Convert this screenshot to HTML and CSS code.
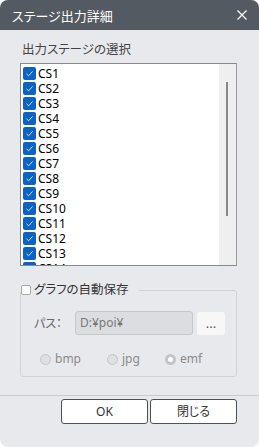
FILE: index.html
```html
<!DOCTYPE html>
<html lang="ja">
<head>
  <meta charset="UTF-8">
  <title>ステージ出力詳細</title>
  <link rel="stylesheet" href="styles.css">
</head>
<body>

  <div class="dialog">
    <div class="titlebar">
      <span class="title">ステージ出力詳細</span>
      <svg class="close" width="10" height="10" viewBox="0 0 10 10">
        <path d="M0.5 0.5 L9.5 9.5 M9.5 0.5 L0.5 9.5" stroke="#fff" stroke-width="1.3" fill="none"/>
      </svg>
    </div>

    <div class="content">
      <div class="label">出力ステージの選択</div>

      <div class="listbox">
        <div class="items" id="items"></div>
        <div class="scrollbar"><div class="thumb"></div></div>
      </div>

      <fieldset class="group">
        <legend><span class="box"></span>グラフの自動保存</legend>

        <div class="path-row">
          <span class="path-label">パス：</span>
          <div class="field">D:¥poi¥</div>
          <div class="browse">...</div>
        </div>

        <div class="radio-row">
          <div class="radio"><span class="dot"></span>bmp</div>
          <div class="radio"><span class="dot"></span>jpg</div>
          <div class="radio"><span class="dot on"></span>emf</div>
        </div>
      </fieldset>
    </div>

    <div class="separator"></div>

    <div class="buttons">
      <div class="btn">OK</div>
      <div class="btn">閉じる</div>
    </div>
  </div>

  <script>
    const items = document.getElementById('items');
    for (let i = 1; i <= 14; i++) {
      const row = document.createElement('div');
      row.className = 'item';
      row.innerHTML =
        '<span class="check"><svg width="13" height="13" viewBox="0 0 13 13">' +
        '<path d="M3.5 6.8 L5.6 8.8 L9.6 4.4" stroke="#cfe2f7" stroke-width="1" fill="none"/>' +
        '</svg></span>CS' + i;
      items.appendChild(row);
    }
  </script>
</body>
</html>
```

FILE: styles.css
```css
* {
  box-sizing: border-box;
}

body {
  margin: 0;
  background: #ffffff;
  font-family: "Noto Sans", "Noto Sans CJK JP", sans-serif;
  font-size: 12px;
  font-feature-settings: "palt";
}

.dialog {
  width: 259px;
  height: 447px;
  background: #e8e9ed;
  border-radius: 8px;
  overflow: hidden;
}

.titlebar {
  height: 30px;
  background: #545a62;
  color: #fff;
  display: flex;
  align-items: center;
  justify-content: space-between;
  padding: 0 12px 0 12px;
}

.title {
  font-size: 13px;
}

.content {
  padding: 0 22px 0 20px;
}

.label {
  margin-top: 12px;
  line-height: 16px;
  font-size: 12.5px;
  color: #444;
  padding-left: 2px;
}

.listbox {
  margin-top: 5px;
  height: 203px;
  border: 1px solid #8a8a8a;
  border-right-color: #9a9a9a;
  background: #fff;
  display: flex;
  overflow: hidden;
}

.items {
  flex: 1;
  padding: 2px 0 0 2px;
}

.item {
  height: 15px;
  line-height: 15px;
  display: flex;
  align-items: center;
  color: #000;
  gap: 2px;
}

.check {
  width: 13px;
  height: 13px;
  background: #0b63c5;
  border-radius: 2px;
  display: flex;
}

.scrollbar {
  width: 17px;
  background: #efefef;
  padding: 18px 0 0 7px;
}

.thumb {
  width: 2px;
  height: 134px;
  background: #888;
}

.group {
  margin: 16px 0 0 0;
  padding: 0 0 9px 0;
  border: 1px solid #d2d3d8;
  border-radius: 3px;
}

legend {
  padding: 0 10px 0 0;
  margin-left: 0;
  line-height: 16px;
  font-size: 12.5px;
  color: #333;
  display: flex;
  align-items: center;
  gap: 3px;
}

.box {
  width: 10px;
  height: 10px;
  background: #fff;
  border: 1px solid #a8a8a8;
  border-radius: 2px;
}

.path-row {
  margin-top: 13px;
  display: flex;
  align-items: center;
  padding-left: 13px;
}

.path-label {
  width: 41px;
  color: #666;
}

.field {
  width: 118px;
  height: 24px;
  background: #dcdde1;
  border: 1px solid #c6c7cb;
  border-radius: 3px;
  color: #777;
  line-height: 22px;
  padding-left: 4px;
}

.browse {
  width: 28px;
  height: 23px;
  margin-left: 4px;
  background: #f7f7f8;
  border-radius: 3px;
  color: #555;
  font-size: 13px;
  text-align: center;
  line-height: 22px;
}

.radio-row {
  margin-top: 16px;
  display: grid;
  grid-template-columns: 67px 58px auto;
  padding-left: 19px;
  line-height: 16px;
  color: #8a8a8a;
}

.radio {
  display: flex;
  align-items: center;
  gap: 4px;
}

.dot {
  width: 11px;
  height: 11px;
  border-radius: 50%;
  background: #e0e0e3;
  border: 1px solid #c4c4c8;
}

.dot.on {
  background: #fff;
  border: 3px solid #c4c4c8;
}

.separator {
  margin-top: 18px;
  height: 1px;
  background: #c9cacd;
}

.buttons {
  margin-top: 3px;
  display: flex;
  justify-content: flex-end;
  gap: 2px;
  padding-right: 22px;
}

.btn {
  width: 87px;
  height: 25px;
  background: #fff;
  border: 1px solid #4e5258;
  border-radius: 3px;
  color: #333;
  text-align: center;
  line-height: 23px;
}
```
